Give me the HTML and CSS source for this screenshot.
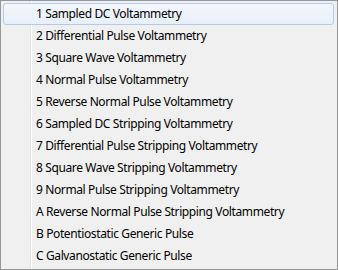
FILE: index.html
```html
<!DOCTYPE html>
<html lang="en">
<head>
  <meta charset="UTF-8">
  <title>Technique menu</title>
  <link rel="stylesheet" href="styles.css">
</head>
<body>
  <div class="menu">
    <div class="item active">1 Sampled DC Voltammetry</div>
    <div class="item">2 Differential Pulse Voltammetry</div>
    <div class="item">3 Square Wave Voltammetry</div>
    <div class="item">4 Normal Pulse Voltammetry</div>
    <div class="item">5 Reverse Normal Pulse Voltammetry</div>
    <div class="item">6 Sampled DC Stripping Voltammetry</div>
    <div class="item">7 Differential Pulse Stripping Voltammetry</div>
    <div class="item">8 Square Wave Stripping Voltammetry</div>
    <div class="item">9 Normal Pulse Stripping Voltammetry</div>
    <div class="item">A Reverse Normal Pulse Stripping Voltammetry</div>
    <div class="item">B Potentiostatic Generic Pulse</div>
    <div class="item">C Galvanostatic Generic Pulse</div>
  </div>
</body>
</html>
```

FILE: styles.css
```css
body {
  margin: 0;
}

.menu {
  box-sizing: border-box;
  width: 338px;
  height: 270px;
  padding: 2px 3px 2px 2px;
  border: 1px solid #979797;
  background-color: #f0f0f0;
  /* left gutter line */
  background-image: linear-gradient(to right, transparent 29px, #e2e3e3 29px, #e2e3e3 30px, #ffffff 30px, #ffffff 31px, transparent 31px);
  font-family: 'Noto Sans', sans-serif;
  font-size: 12px;
  letter-spacing: -0.38px;
  color: #000000;
}

.item {
  box-sizing: border-box;
  height: 22px;
  line-height: 20px;
  padding-left: 32px;
  border: 1px solid transparent;
  border-radius: 3px;
  white-space: nowrap;
}

.item.active {
  border-color: #aeccf1;
  background: linear-gradient(#f3f7fd, #e8eff9);
}
```
